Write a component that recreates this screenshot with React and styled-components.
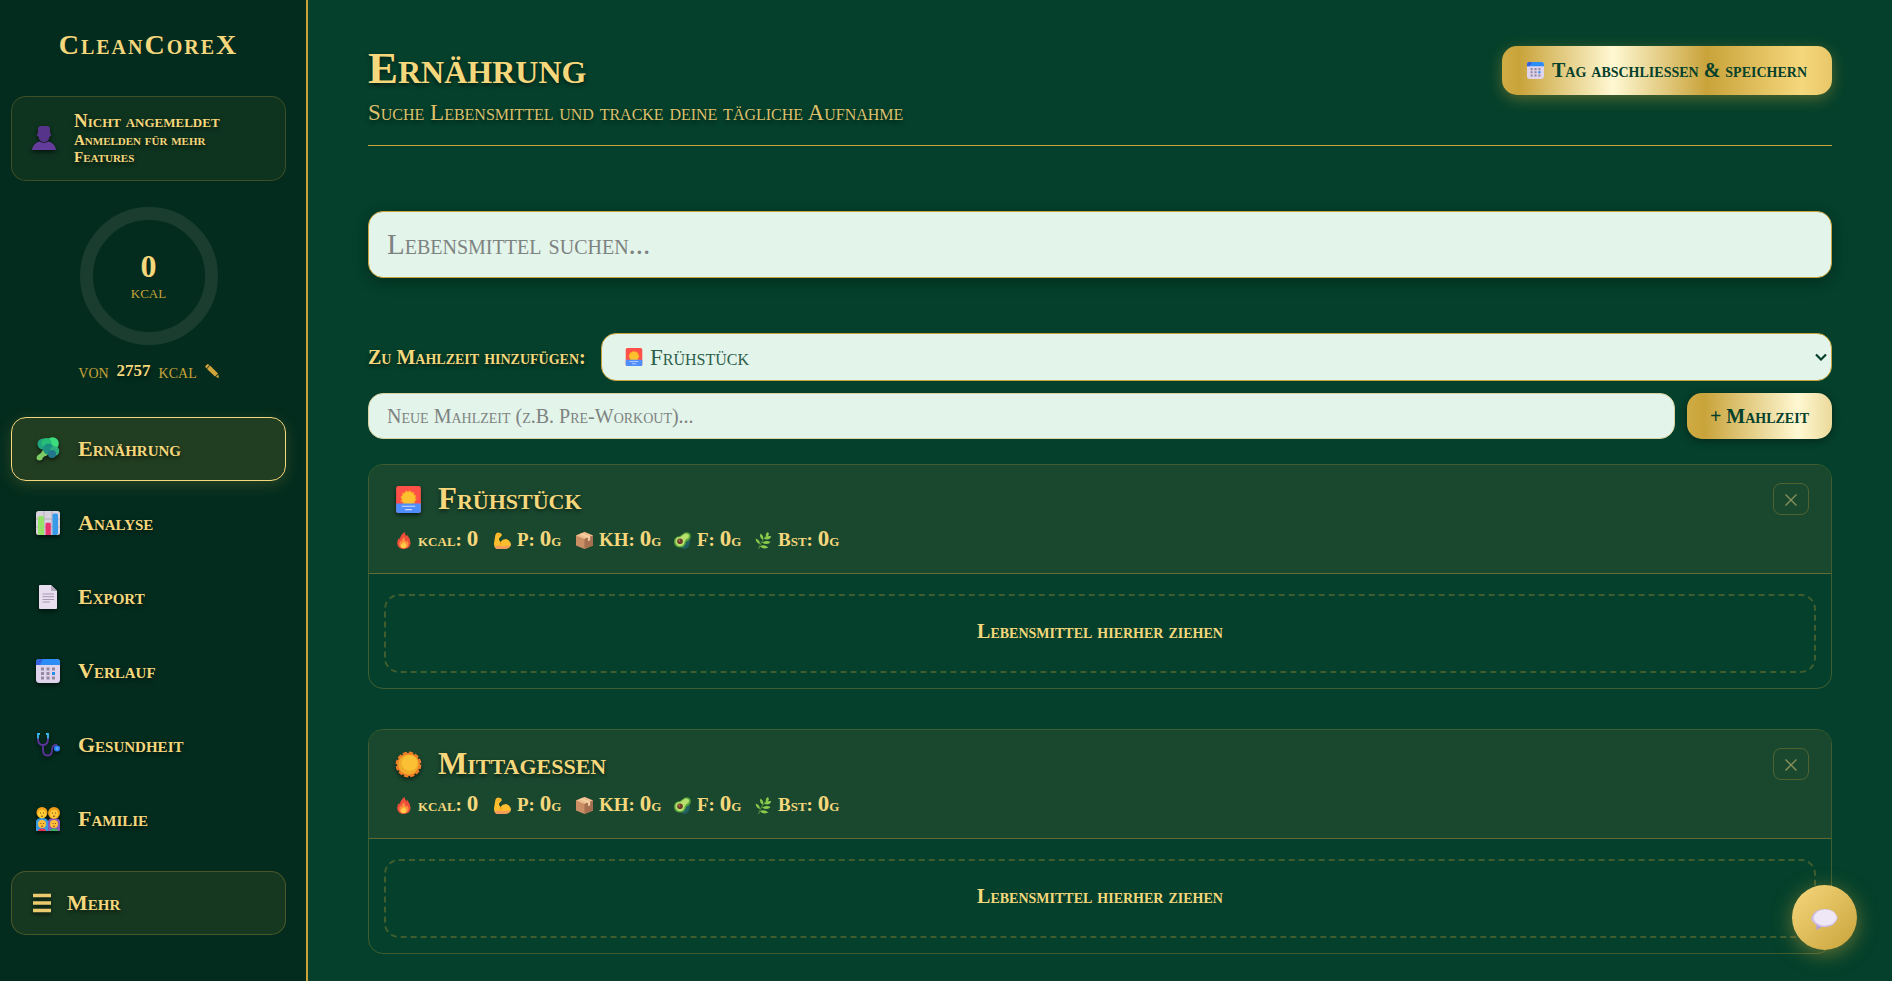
import { useState } from "react";
import styled, { createGlobalStyle, css } from "styled-components";

const navItems = [
  { label: "Ernährung", icon: <Broccoli /> },
  { label: "Analyse", icon: <Chart /> },
  { label: "Export", icon: <PageIcon /> },
  { label: "Verlauf", icon: <Calendar /> },
  { label: "Gesundheit", icon: <Stethoscope /> },
  { label: "Familie", icon: <Family /> },
];

const meals = [
  { name: "Frühstück", icon: <Sunrise /> },
  { name: "Mittagessen", icon: <Sun /> },
];

const nutrients = [
  { label: "kcal:", unit: "", icon: <Fire />, width: 99 },
  { label: "P:", unit: "g", icon: <Muscle />, width: 82 },
  { label: "KH:", unit: "g", icon: <Box />, width: 98 },
  { label: "F:", unit: "g", icon: <Avocado />, width: 81 },
  { label: "Bst:", unit: "g", icon: <Herb />, width: 86 },
];

export default function App() {
  const [active, setActive] = useState("Ernährung");

  return (
    <Layout>
      <GlobalStyle />
      <Sidebar>
        <Logo>CleanCoreX</Logo>

        <Profile type="button">
          <Icon $size={24}><Person /></Icon>
          <div>
            <strong>Nicht angemeldet</strong>
            <small>Anmelden für mehr Features</small>
          </div>
        </Profile>

        <Ring>
          <svg viewBox="0 0 138 138" aria-hidden="true">
            <circle cx="69" cy="69" r="62.5" fill="none" stroke="#1a3d30" strokeWidth="13" />
          </svg>
          <strong>0</strong>
          <span>kcal</span>
        </Ring>
        <Goal>
          von <strong>2757</strong> kcal
          <button type="button" aria-label="Ziel bearbeiten"><Pencil /></button>
        </Goal>

        <Nav>
          {navItems.map((item) => (
            <NavButton
              key={item.label}
              type="button"
              $active={active === item.label}
              onClick={() => setActive(item.label)}
            >
              <Icon $size={24}>{item.icon}</Icon>
              {item.label}
            </NavButton>
          ))}
        </Nav>
        <MoreButton type="button">
          <Icon $size={20}><MenuBars /></Icon>
          Mehr
        </MoreButton>
      </Sidebar>

      <Main>
        <Header>
          <div>
            <h1>Ernährung</h1>
            <p>Suche Lebensmittel und tracke deine tägliche Aufnahme</p>
          </div>
          <SaveButton type="button">
            <Calendar />
            Tag abschließen &amp; speichern
          </SaveButton>
        </Header>

        <SearchInput type="text" placeholder="Lebensmittel suchen..." aria-label="Lebensmittel suchen" />

        <FormRow>
          <label htmlFor="meal">Zu Mahlzeit hinzufügen:</label>
          <SelectWrap>
            <Sunrise />
            <select id="meal">
              <option>Frühstück</option>
              <option>Mittagessen</option>
            </select>
            <svg viewBox="0 0 12 8" aria-hidden="true">
              <path d="M1 1.500 6 6.500l5-5" fill="none" stroke="#04402b" strokeWidth="2.200" />
            </svg>
          </SelectWrap>
        </FormRow>
        <FormRow>
          <MealInput type="text" placeholder="Neue Mahlzeit (z.B. Pre-Workout)..." aria-label="Neue Mahlzeit" />
          <AddButton type="button">+ Mahlzeit</AddButton>
        </FormRow>

        <Meals>
          {meals.map((meal) => (
            <MealCard key={meal.name}>
              <MealHeader>
                <div>
                  <h2>
                    <Icon $size={27}>{meal.icon}</Icon>
                    {meal.name}
                  </h2>
                  <Stats>
                    {nutrients.map((n) => (
                      <Stat key={n.label} $width={n.width}>
                        {n.icon}
                        <span>{n.label} <b>0</b>{n.unit}</span>
                      </Stat>
                    ))}
                  </Stats>
                </div>
                <RemoveButton type="button" aria-label={`${meal.name} entfernen`}>
                  <svg viewBox="0 0 12 12"><path d="M.5.5l11 11M11.500.5l-11 11" stroke="currentColor" strokeWidth="1.400" /></svg>
                </RemoveButton>
              </MealHeader>
              <MealBody>
                <DropZone>Lebensmittel hierher ziehen</DropZone>
              </MealBody>
            </MealCard>
          ))}
        </Meals>
      </Main>

      <ChatButton type="button" aria-label="Chat"><Bubble /></ChatButton>
    </Layout>
  );
}

// ---- icons ----

function Person() {
  return (
    <svg viewBox="0 0 24 24">
      <path d="M6 3Q6 0 9 0h6q3 0 3 3v4.500q1.300-.2 1.200 1.200-.2 1.500-1.400 1.500-1 4.500-4 5.800h-3.600q-3-1.300-4-5.800Q5 10.200 4.800 8.700 4.700 7.300 6 7.500Z" fill="#56348a" />
      <path d="M0 24q.7-6.500 7.500-8.500 4.500 2.500 9 0 6.800 2 7.500 8.500Z" fill="#633c9c" />
    </svg>
  );
}

function Broccoli() {
  return (
    <svg viewBox="0 0 24 24">
      <path d="M8 11 5 16l-3.500 2.500Q0 20 1 22.500q2 2 5 .3 1-3.800 4-3.800l5-4Z" fill="#7ccb63" />
      <circle cx="7" cy="7" r="5.500" fill="#22a47d" />
      <circle cx="16.500" cy="6.500" r="6.300" fill="#3ddc7d" />
      <circle cx="10.500" cy="6" r="5" fill="#26bd78" />
      <circle cx="12.500" cy="12" r="5.500" fill="#1b8f80" />
      <circle cx="18.500" cy="14" r="4.800" fill="#2fae7d" />
      <circle cx="16" cy="17" r="4" fill="#22778c" />
    </svg>
  );
}

function Chart() {
  return (
    <svg viewBox="0 0 24 24">
      <rect width="24" height="24" rx="2.500" fill="#d8d2de" />
      <path d="M8 0v24M16 0v24M0 8h24M0 16h24" stroke="#b3abba" />
      <path d="M2 6.500Q2 5 3.500 5h3Q8 5 8 6.500V24H3.500L2 22.500Z" fill="#95e268" />
      <path d="M9.500 13q0-1.200 1.300-1.200h2.700q1.300 0 1.300 1.200v11H9.500Z" fill="#e7326f" />
      <path d="M16.500 4q0-1.500 1.500-1.500h2.500Q22 2.500 22 4v18.500L20.500 24h-4Z" fill="#379be9" />
    </svg>
  );
}

function PageIcon() {
  return (
    <svg viewBox="0 0 24 24">
      <path d="M3 1q0-1 1-1h11l6 6v17q0 1-1 1H4q-1 0-1-1Z" fill="#e7def0" />
      <path d="M15 0v6h6Z" fill="#b7abc0" />
      <path d="M6.500 9H18M6.500 11.700H18M6.500 14.500H18M6.500 17H14" stroke="#a598b2" />
    </svg>
  );
}

function Calendar() {
  return (
    <svg viewBox="0 0 24 24">
      <rect width="24" height="24" rx="3.500" fill="#ded4ec" />
      <path d="M0 6V3.500Q0 0 3.500 0h17Q24 0 24 3.500V6Z" fill="#2b8df5" />
      <path d="M0 6V3.500Q0 0 3.500 0H7L4 6Z" fill="#3560e0" />
      <g fill="#9589a2">
        <path d="M5 8.500h3v3H5zM10.500 8.500h3v3h-3zM16 8.500h3v3h-3zM5 13h3v3H5zM10.500 13h3v3h-3zM5 17.500h3v3H5zM10.500 17.500h3v3h-3zM16 17.500h3v3h-3z" />
      </g>
      <path d="M16 13h3v3h-3z" fill="#248bed" />
    </svg>
  );
}

function Stethoscope() {
  return (
    <svg viewBox="0 0 24 24" fill="none">
      <path d="M2 1v5q0 6 5 6t5-6V1M7 12v5q0 5.500 4.500 5.500T16 17t5-5" stroke="#5c359c" strokeWidth="1.800" />
      <path d="M2 5.500V1h2M12 5.500V1h-2" stroke="#35b8ea" strokeWidth="1.800" />
      <circle cx="21" cy="15.500" r="3" fill="#2985ff" />
      <circle cx="21" cy="15.500" r="1.200" fill="#5fa7ff" />
    </svg>
  );
}

function Family() {
  return (
    <svg viewBox="0 0 24 24">
      <path d="M0 24V14q1-3 6-3t6 3v10Z" fill="#3a9be5" />
      <path d="M12 24V14q1-3 6-3t6 3v10Z" fill="#8559b5" />
      <circle cx="6" cy="5.500" r="5.500" fill="#f2a21b" />
      <circle cx="18" cy="6" r="6" fill="#ee9d18" />
      <circle cx="6" cy="7" r="4.300" fill="#ffcf35" />
      <circle cx="18" cy="7" r="4.300" fill="#ffc93a" />
      <path d="M4 6h1M7 6h1M16 6h1M19 6h1M5 9q1 .8 2 0M17 9q1 .8 2 0" stroke="#79451f" fill="none" />
      <circle cx="6" cy="17" r="4" fill="#ffc13a" />
      <circle cx="18" cy="17" r="4" fill="#ffc13a" />
      <path d="M4.500 16.500h1M7 16.500h1M16.500 16.500h1M19 16.500h1M5 19q1 .8 2 0M17 19q1 .8 2 0" stroke="#8e4b1d" fill="none" />
      <path d="M2 24q0-2.500 4-2.500t4 2.500Z" fill="#ed2f55" />
      <path d="M14 24q0-2.500 4-2.500t4 2.500Z" fill="#35b765" />
    </svg>
  );
}

function Sunrise() {
  return (
    <svg viewBox="0 0 24 24">
      <rect x="1" width="22" height="24" rx="2" fill="#ff5147" />
      <circle cx="12" cy="11" r="6" fill="#f9a826" stroke="#f9a826" strokeWidth="2" strokeDasharray="2 1.140" />
      <circle cx="12" cy="11" r="5.800" fill="#ffc02f" />
      <path d="M1 15.500h22V22q0 2-2 2H3q-2 0-2-2Z" fill="#4f8dfa" />
      <path d="M6 18h12M9 21h6" stroke="#cfdcff" strokeWidth="1" />
    </svg>
  );
}

function Sun() {
  return (
    <svg viewBox="0 0 24 24">
      <circle cx="12" cy="12" r="10.200" fill="#ee7f28" stroke="#ee7f28" strokeWidth="2.500" strokeDasharray="3.800 1.540" />
      <circle cx="12" cy="12" r="9" fill="#f0ab2b" />
      <circle cx="13" cy="10.500" r="7" fill="#fbc034" />
    </svg>
  );
}

function Fire() {
  return (
    <svg viewBox="0 0 24 24">
      <path d="M14 0q-1 2 2 6l1-2q5 6 5 12-1 8-9.500 8T3 15.500Q3 11 6 8l.5 3Q8 3 14 0Z" fill="#ee4f3a" />
      <path d="M13 7q0 4 3.500 7l1-2q2 3 1.500 6-1.500 5-6.500 5T6 17.500q0-3 2-5l1 2q0-4 4-7.500Z" fill="#ff8e3c" />
      <path d="M13 14q4 4 3 6.500t-4 2.500-4-2.500 5-6.500Z" fill="#ffc94a" />
    </svg>
  );
}

function Muscle() {
  return (
    <svg viewBox="0 0 24 24">
      <path d="M2 4Q4 0 7 1q4 0 4 4L9 7q-2 1-2 4l2 3q3-4 8-4 6 2 7 7 0 6-8 7H4q-4-1-4-8Z" fill="#ffbe2e" />
      <path d="M1 20q4-2 9 0 7 1 13-2-1 5-8 6H4q-2-1-3-4Z" fill="#f49a5d" />
      <path d="M8 3 5 5M9 14q1 2 1 4" stroke="#d98118" fill="none" />
    </svg>
  );
}

function Box() {
  return (
    <svg viewBox="0 0 24 24">
      <path d="M0 5 12 0l12 5v14l-12 5L0 19Z" fill="#c98e66" />
      <path d="M0 5 12 0l12 5-12 5Z" fill="#eebd8d" />
      <path d="M12 10l12-5v14l-12 5Z" fill="#a56f50" />
      <path d="m5 3 12 5v5l3-1.300V6.500L8 1.700Z" fill="#f2d0a3" />
    </svg>
  );
}

function Avocado() {
  return (
    <svg viewBox="0 0 24 24">
      <path d="M9 19q5-1 6-6l7-4q2 6-2 12-4 4-9 2Z" fill="#225f62" />
      <path d="M12 3q4-4 9-2 4 2 2 8-2 3-6 5-1 8-9 8-8-1-8-9 1-7 8-7Z" fill="#58a43c" />
      <path d="M13 4q4-3 7-1 3 3-1 6-3 1-4 5-1 6-7 6-6-1-6-7t7-6Z" fill="#b7df6c" />
      <circle cx="8.500" cy="13" r="4" fill="#6f3d2b" />
      <circle cx="7.500" cy="12" r="1.300" fill="#ac765f" />
    </svg>
  );
}

function Herb() {
  return (
    <svg viewBox="0 0 24 24">
      <path d="M5 24Q8 13 17 4" stroke="#4d8b3c" strokeWidth="1.500" fill="none" />
      <g fill="#8bcb4c">
        <path d="M16 7q-2-5 2-7 4 4-2 7ZM11 11Q5 7 8 2q5 4 3 9ZM7 17q-6-2-6-8 6 2 6 8ZM13 10q3-6 10-4-2 6-10 4ZM10 15q5-4 12-1-4 5-12 1ZM7 20q6-3 12 2-7 3-12-2Z" />
      </g>
    </svg>
  );
}

function Bubble() {
  return (
    <svg viewBox="0 0 28 22">
      <path d="M5.500 14v7q0 1 1.200.4L12 18Z" fill="#b29fd8" />
      <path d="M6 17Q0 13.500 0 9.500 3 0 14 0t14 9.500Q25 19 14 19q-4.500 0-8-2Z" fill="#cdbce4" />
      <path d="M7 15.500Q2.500 13 2.500 9 5 .5 15 .5T27 9q-2.500 8.500-13 8.500-4 0-7-2Z" fill="#efe7f5" />
    </svg>
  );
}

function Pencil() {
  return (
    <svg viewBox="0 0 14 14">
      <path d="M0 2.500 2.500 0l2 1-3 3.500ZM2 5l3-3.500 8 8-3 3Z" fill="#cfa43b" />
      <path d="m13.200 10.500.8 3.500-3.200-1Z" fill="#cfa43b" />
    </svg>
  );
}

function MenuBars() {
  return (
    <svg viewBox="0 0 20 20">
      <path d="M1 2.500h18M1 10h18M1 17.500h18" stroke="#ebca6f" strokeWidth="3.500" />
    </svg>
  );
}

// ---- styles ----

const gold = "#f5d77c";
const darkGold = "#c9a33a";
const green = "#04402b";
const mint = "#e3f4eb";

const textShadow = css`
  text-shadow: 0 2px 4px rgba(0, 0, 0, 0.6);
`;

const GlobalStyle = createGlobalStyle`
  * {
    box-sizing: border-box;
  }
  body {
    margin: 0;
    background: ${green};
    color: ${gold};
  }
  body, button, input, select {
    font-family: "Liberation Serif", "Times New Roman", serif;
    font-variant: small-caps;
  }
  button {
    cursor: pointer;
  }
  h1, h2, p {
    margin: 0;
  }
`;

const Layout = styled.div`
  display: flex;
  height: 100vh;
  overflow: hidden;
`;

const Sidebar = styled.aside`
  display: flex;
  flex-direction: column;
  flex: 0 0 308px;
  padding: 26px 20px 0 11px;
  background: #032c1e;
  border-right: 2px solid ${darkGold};
`;

const Logo = styled.div`
  margin-bottom: 32px;
  font-size: 28px;
  line-height: 38px;
  font-weight: 700;
  letter-spacing: 2px;
  text-align: center;
`;

const Icon = styled.span`
  display: flex;
  flex: none;
  width: ${(props) => props.$size}px;
  height: ${(props) => props.$size}px;
  filter: drop-shadow(0 2px 2px rgba(0, 0, 0, 0.6));
  svg {
    width: 100%;
    height: 100%;
  }
`;

const Profile = styled.button`
  display: flex;
  align-items: center;
  gap: 18px;
  height: 85px;
  padding: 0 20px 2px;
  border: 1px solid rgba(201, 163, 58, 0.25);
  border-radius: 15px;
  background: rgba(201, 163, 58, 0.06);
  color: ${gold};
  text-align: left;
  ${textShadow}
  strong, small {
    display: block;
    font-weight: 700;
  }
  strong {
    font-size: 19px;
    line-height: 22px;
  }
  small {
    font-size: 15px;
    line-height: 17px;
    max-width: 150px;
  }
`;

const Ring = styled.div`
  display: grid;
  place-items: center;
  align-content: center;
  align-self: center;
  width: 138px;
  height: 138px;
  margin-top: 26px;
  svg {
    grid-area: 1 / 1 / 3 / 2;
    width: 138px;
    height: 138px;
  }
  strong {
    grid-area: 1 / 1;
    align-self: end;
    font-size: 32px;
    line-height: 32px;
  }
  span {
    grid-area: 2 / 1;
    align-self: start;
    font-size: 18px;
    line-height: 20px;
    color: ${darkGold};
  }
`;

const Goal = styled.div`
  display: flex;
  align-items: center;
  justify-content: center;
  gap: 8px;
  margin-top: 14px;
  font-size: 20px;
  line-height: 24px;
  color: ${darkGold};
  strong {
    font-size: 17px;
    color: ${gold};
    ${textShadow}
  }
  button {
    display: flex;
    padding: 0;
    border: 0;
    background: none;
  }
  svg {
    width: 14px;
    height: 14px;
  }
`;

const Nav = styled.nav`
  display: flex;
  flex-direction: column;
  gap: 10px;
  margin-top: 34px;
`;

const NavButton = styled.button`
  display: flex;
  align-items: center;
  gap: 18px;
  height: 64px;
  padding: 0 24px;
  border: 1px solid ${(props) => (props.$active ? gold : "transparent")};
  border-radius: 15px;
  background: ${(props) => (props.$active ? "rgba(201, 163, 58, 0.16)" : "transparent")};
  box-shadow: ${(props) => (props.$active ? "0 4px 15px rgba(201, 163, 58, 0.2)" : "none")};
  color: ${gold};
  font-size: 22px;
  font-weight: 700;
  ${textShadow}
`;

const MoreButton = styled(NavButton)`
  gap: 15px;
  margin-top: 20px;
  padding: 0 20px;
  border-color: rgba(201, 163, 58, 0.3);
  background: rgba(201, 163, 58, 0.1);
`;

const Main = styled.main`
  flex: 1;
  min-width: 0;
  padding: 46px 60px 0;
  overflow: hidden;
`;

const Header = styled.header`
  display: flex;
  align-items: flex-start;
  justify-content: space-between;
  padding-bottom: 18px;
  margin-bottom: 65px;
  border-bottom: 1px solid ${darkGold};
  h1 {
    font-size: 45px;
    line-height: 44px;
    ${textShadow}
  }
  p {
    margin-top: 9px;
    font-size: 23px;
    line-height: 28px;
    color: #dcc06c;
    ${textShadow}
  }
`;

const goldButton = css`
  display: flex;
  align-items: center;
  justify-content: center;
  border: 0;
  border-radius: 15px;
  background: linear-gradient(90deg, #d0ac45 0, #c9a33a 17px, #fff8d2 111px, #c9a33a 205px, #f5d77c 300px, #c9a33a 395px);
  color: ${green};
  font-weight: 700;
`;

const SaveButton = styled.button`
  ${goldButton}
  gap: 8px;
  height: 49px;
  padding: 0 25px;
  font-size: 20px;
  box-shadow: 0 4px 15px rgba(201, 163, 58, 0.4);
  svg {
    flex: none;
    width: 17px;
    height: 17px;
  }
`;

const inputStyles = css`
  width: 100%;
  padding: 0 18px;
  border: 1px solid ${darkGold};
  border-radius: 15px;
  outline: none;
  background: ${mint};
  color: ${green};
  &::placeholder {
    color: #7d8380;
  }
`;

const SearchInput = styled.input`
  ${inputStyles}
  display: block;
  height: 67px;
  margin-bottom: 55px;
  font-size: 29px;
  box-shadow: 0 4px 15px rgba(0, 0, 0, 0.3);
`;

const FormRow = styled.div`
  display: flex;
  align-items: center;
  gap: 12px;
  margin-bottom: 12px;
  label {
    flex: none;
    min-width: 221px;
    font-size: 20px;
    font-weight: 700;
    ${textShadow}
  }
`;

const SelectWrap = styled.div`
  display: grid;
  flex: 1;
  align-items: center;
  > * {
    grid-area: 1 / 1;
  }
  > svg {
    z-index: 1;
    width: 18px;
    height: 18px;
    margin-left: 24px;
    pointer-events: none;
  }
  select {
    ${inputStyles}
    height: 48px;
    padding-left: 48px;
    color: #2c6049;
    font-size: 23px;
    appearance: none;
  }
  > svg:last-child {
    justify-self: end;
    width: 12px;
    height: 8px;
    margin: 0 5px 0 0;
  }
`;

const MealInput = styled.input`
  ${inputStyles}
  flex: 1;
  height: 46px;
  border-color: #d9d2a0;
  font-size: 20px;
`;

const AddButton = styled.button`
  ${goldButton}
  height: 46px;
  padding: 0 23px;
  font-size: 20px;
  box-shadow: 0 2px 8px rgba(0, 0, 0, 0.4);
`;

const Meals = styled.section`
  display: flex;
  flex-direction: column;
  gap: 40px;
  margin-top: 25px;
`;

const MealCard = styled.article`
  border: 1px solid rgba(201, 163, 58, 0.3);
  border-radius: 15px;
  overflow: hidden;
`;

const MealHeader = styled.div`
  display: flex;
  align-items: flex-start;
  justify-content: space-between;
  padding: 18px 22px 20px 26px;
  border-bottom: 1px solid rgba(201, 163, 58, 0.4);
  background: #1a482f;
  h2 {
    display: flex;
    align-items: center;
    gap: 16px;
    font-size: 31px;
    line-height: 32px;
    ${textShadow}
  }
`;

const Stats = styled.div`
  display: flex;
  margin-top: 12px;
`;

const Stat = styled.div`
  display: flex;
  align-items: center;
  gap: 6px;
  min-width: ${(props) => props.$width}px;
  font-size: 19px;
  line-height: 26px;
  font-weight: 700;
  white-space: nowrap;
  svg {
    flex: none;
    width: 17px;
    height: 17px;
  }
  b {
    font-size: 23px;
    line-height: 20px;
  }
`;

const RemoveButton = styled.button`
  display: flex;
  align-items: center;
  justify-content: center;
  width: 36px;
  height: 32px;
  padding: 2px 0 0;
  border: 1px solid rgba(201, 163, 58, 0.3);
  border-radius: 8px;
  background: none;
  color: #88905a;
  svg {
    width: 12px;
    height: 12px;
  }
`;

const MealBody = styled.div`
  padding: 20px 15px 15px;
`;

const DropZone = styled.div`
  display: flex;
  align-items: center;
  justify-content: center;
  height: 79px;
  padding-bottom: 4px;
  border: 2px dashed rgba(201, 163, 58, 0.3);
  border-radius: 15px;
  font-size: 20px;
  font-weight: 700;
`;

const ChatButton = styled.button`
  position: fixed;
  right: 35px;
  bottom: 31px;
  display: flex;
  align-items: center;
  justify-content: center;
  width: 65px;
  height: 65px;
  border: 0;
  border-radius: 50%;
  background: linear-gradient(135deg, #f5d77c, #c9a33a);
  box-shadow: 0 4px 20px rgba(201, 163, 58, 0.5);
  svg {
    width: 27px;
    height: 21px;
    margin-top: 3px;
  }
`;
